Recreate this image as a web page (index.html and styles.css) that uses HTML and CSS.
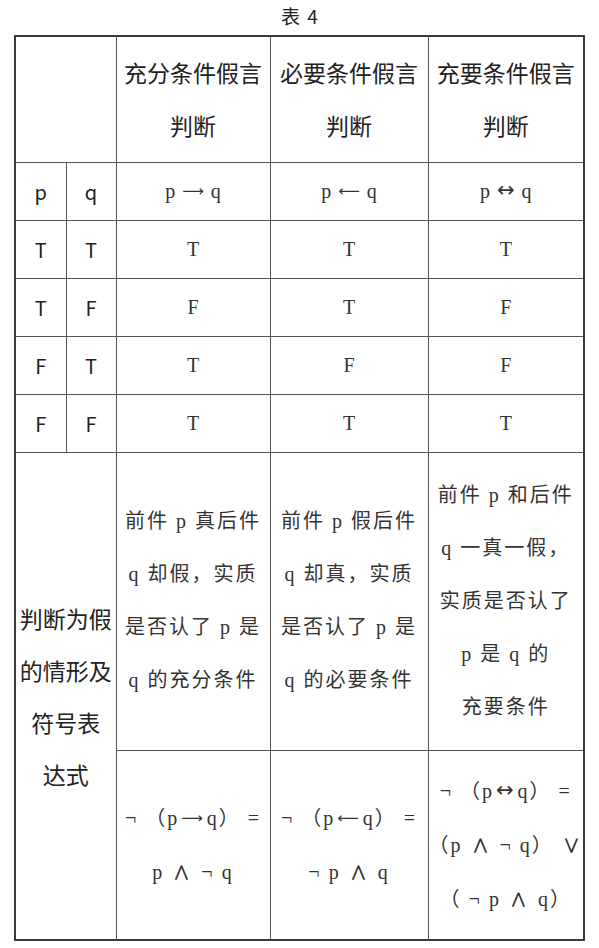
FILE: index.html
```html
<!DOCTYPE html>
<html lang="zh">
<head>
<meta charset="utf-8">
<title>表 4</title>
<link rel="stylesheet" href="styles.css">
</head>
<body>
<div class="caption">表 4</div>
<table class="truth">
  <colgroup>
    <col class="c1"><col class="c2"><col class="c3"><col class="c4"><col class="c5">
  </colgroup>
  <tr class="r-head">
    <th colspan="2"></th>
    <th class="head">充分条件假言<br>判断</th>
    <th class="head">必要条件假言<br>判断</th>
    <th class="head">充要条件假言<br>判断</th>
  </tr>
  <tr class="r-row">
    <td class="sans">p</td><td class="sans">q</td>
    <td class="serif">p <span class="arr">⟶</span> q</td>
    <td class="serif">p <span class="arr">⟵</span> q</td>
    <td class="serif">p <span class="arr2">↔</span> q</td>
  </tr>
  <tr class="r-row">
    <td class="sans">T</td><td class="sans">T</td>
    <td class="serif">T</td><td class="serif">T</td><td class="serif">T</td>
  </tr>
  <tr class="r-row">
    <td class="sans">T</td><td class="sans">F</td>
    <td class="serif">F</td><td class="serif">T</td><td class="serif">F</td>
  </tr>
  <tr class="r-row">
    <td class="sans">F</td><td class="sans">T</td>
    <td class="serif">T</td><td class="serif">F</td><td class="serif">F</td>
  </tr>
  <tr class="r-row">
    <td class="sans">F</td><td class="sans">F</td>
    <td class="serif">T</td><td class="serif">T</td><td class="serif">T</td>
  </tr>
  <tr class="r-case">
    <td colspan="2" rowspan="2" class="sans side">判断为假<br>的情形及<br>符号表<br>达式</td>
    <td class="serif text">前件 p 真后件<br>q 却假，实质<br>是否认了 p 是<br>q 的充分条件</td>
    <td class="serif text">前件 p 假后件<br>q 却真，实质<br>是否认了 p 是<br>q 的必要条件</td>
    <td class="serif text">前件 p 和后件<br>q 一真一假，<br>实质是否认了<br>p 是 q 的<br>充要条件</td>
  </tr>
  <tr class="r-formula">
    <td class="serif text formula">¬ （p<span class="arr">⟶</span>q） =<br>p <span class="op">∧</span> ¬ q</td>
    <td class="serif text formula">¬ （p<span class="arr">⟵</span>q） =<br>¬ p <span class="op">∧</span> q</td>
    <td class="serif text formula">¬ （p<span class="arr2">↔</span>q） =<br>（p <span class="op">∧</span> ¬ q） <span class="op">∨</span><br>（ ¬ p <span class="op">∧</span> q）</td>
  </tr>
</table>
</body>
</html>
```

FILE: styles.css
```css
html, body {
  margin: 0;
  padding: 0;
  background: #ffffff;
}

.caption {
  height: 35px;
  line-height: 31px;
  text-align: center;
  font-family: "Noto Sans CJK SC", sans-serif;
  font-size: 19px;
  word-spacing: 3px;
  color: #222222;
}

.truth {
  margin-left: 14px;
  width: 569px;
  table-layout: fixed;
  border-collapse: collapse;
  border: 2px solid #3a3a3a;
}

.c1 { width: 51px; }
.c2 { width: 50px; }
.c3 { width: 154px; }
.c4 { width: 158px; }
.c5 { width: 156px; }

.truth th,
.truth td {
  border: 1px solid #555555;
  padding: 0;
  text-align: center;
  vertical-align: middle;
  font-weight: normal;
}

.r-head { height: 126px; }
.r-row { height: 58px; }
.r-case { height: 298px; }
.r-formula { height: 190px; }

.head {
  font-family: "Noto Sans CJK SC", sans-serif;
  font-size: 23px;
  line-height: 53px;
  color: #222222;
}

.sans {
  font-family: "Noto Sans CJK SC", sans-serif;
  font-size: 20px;
  color: #222222;
}

.serif {
  font-family: "Liberation Serif", "DejaVu Serif", "Noto Sans CJK SC", serif;
  font-size: 20px;
  color: #333333;
}

.arr {
  font-family: "DejaVu Sans", sans-serif;
  font-size: 15px;
  line-height: 1;
  position: relative;
  top: -2px;
  margin: 0 2px;
}

.arr2 {
  font-family: "DejaVu Sans", sans-serif;
  font-size: 21px;
  line-height: 1;
  position: relative;
  top: -1px;
  margin: 0 2px;
}

.op {
  font-family: "DejaVu Sans", sans-serif;
  font-weight: 300;
  font-size: 25px;
  line-height: 1;
  position: relative;
  top: 1px;
}

.side {
  font-size: 23px;
  line-height: 52px;
  padding-top: 4px;
}

.text {
  line-height: 53px;
  letter-spacing: 2px;
  white-space: nowrap;
}

.formula {
  line-height: 54px;
  padding-top: 8px;
}
```
